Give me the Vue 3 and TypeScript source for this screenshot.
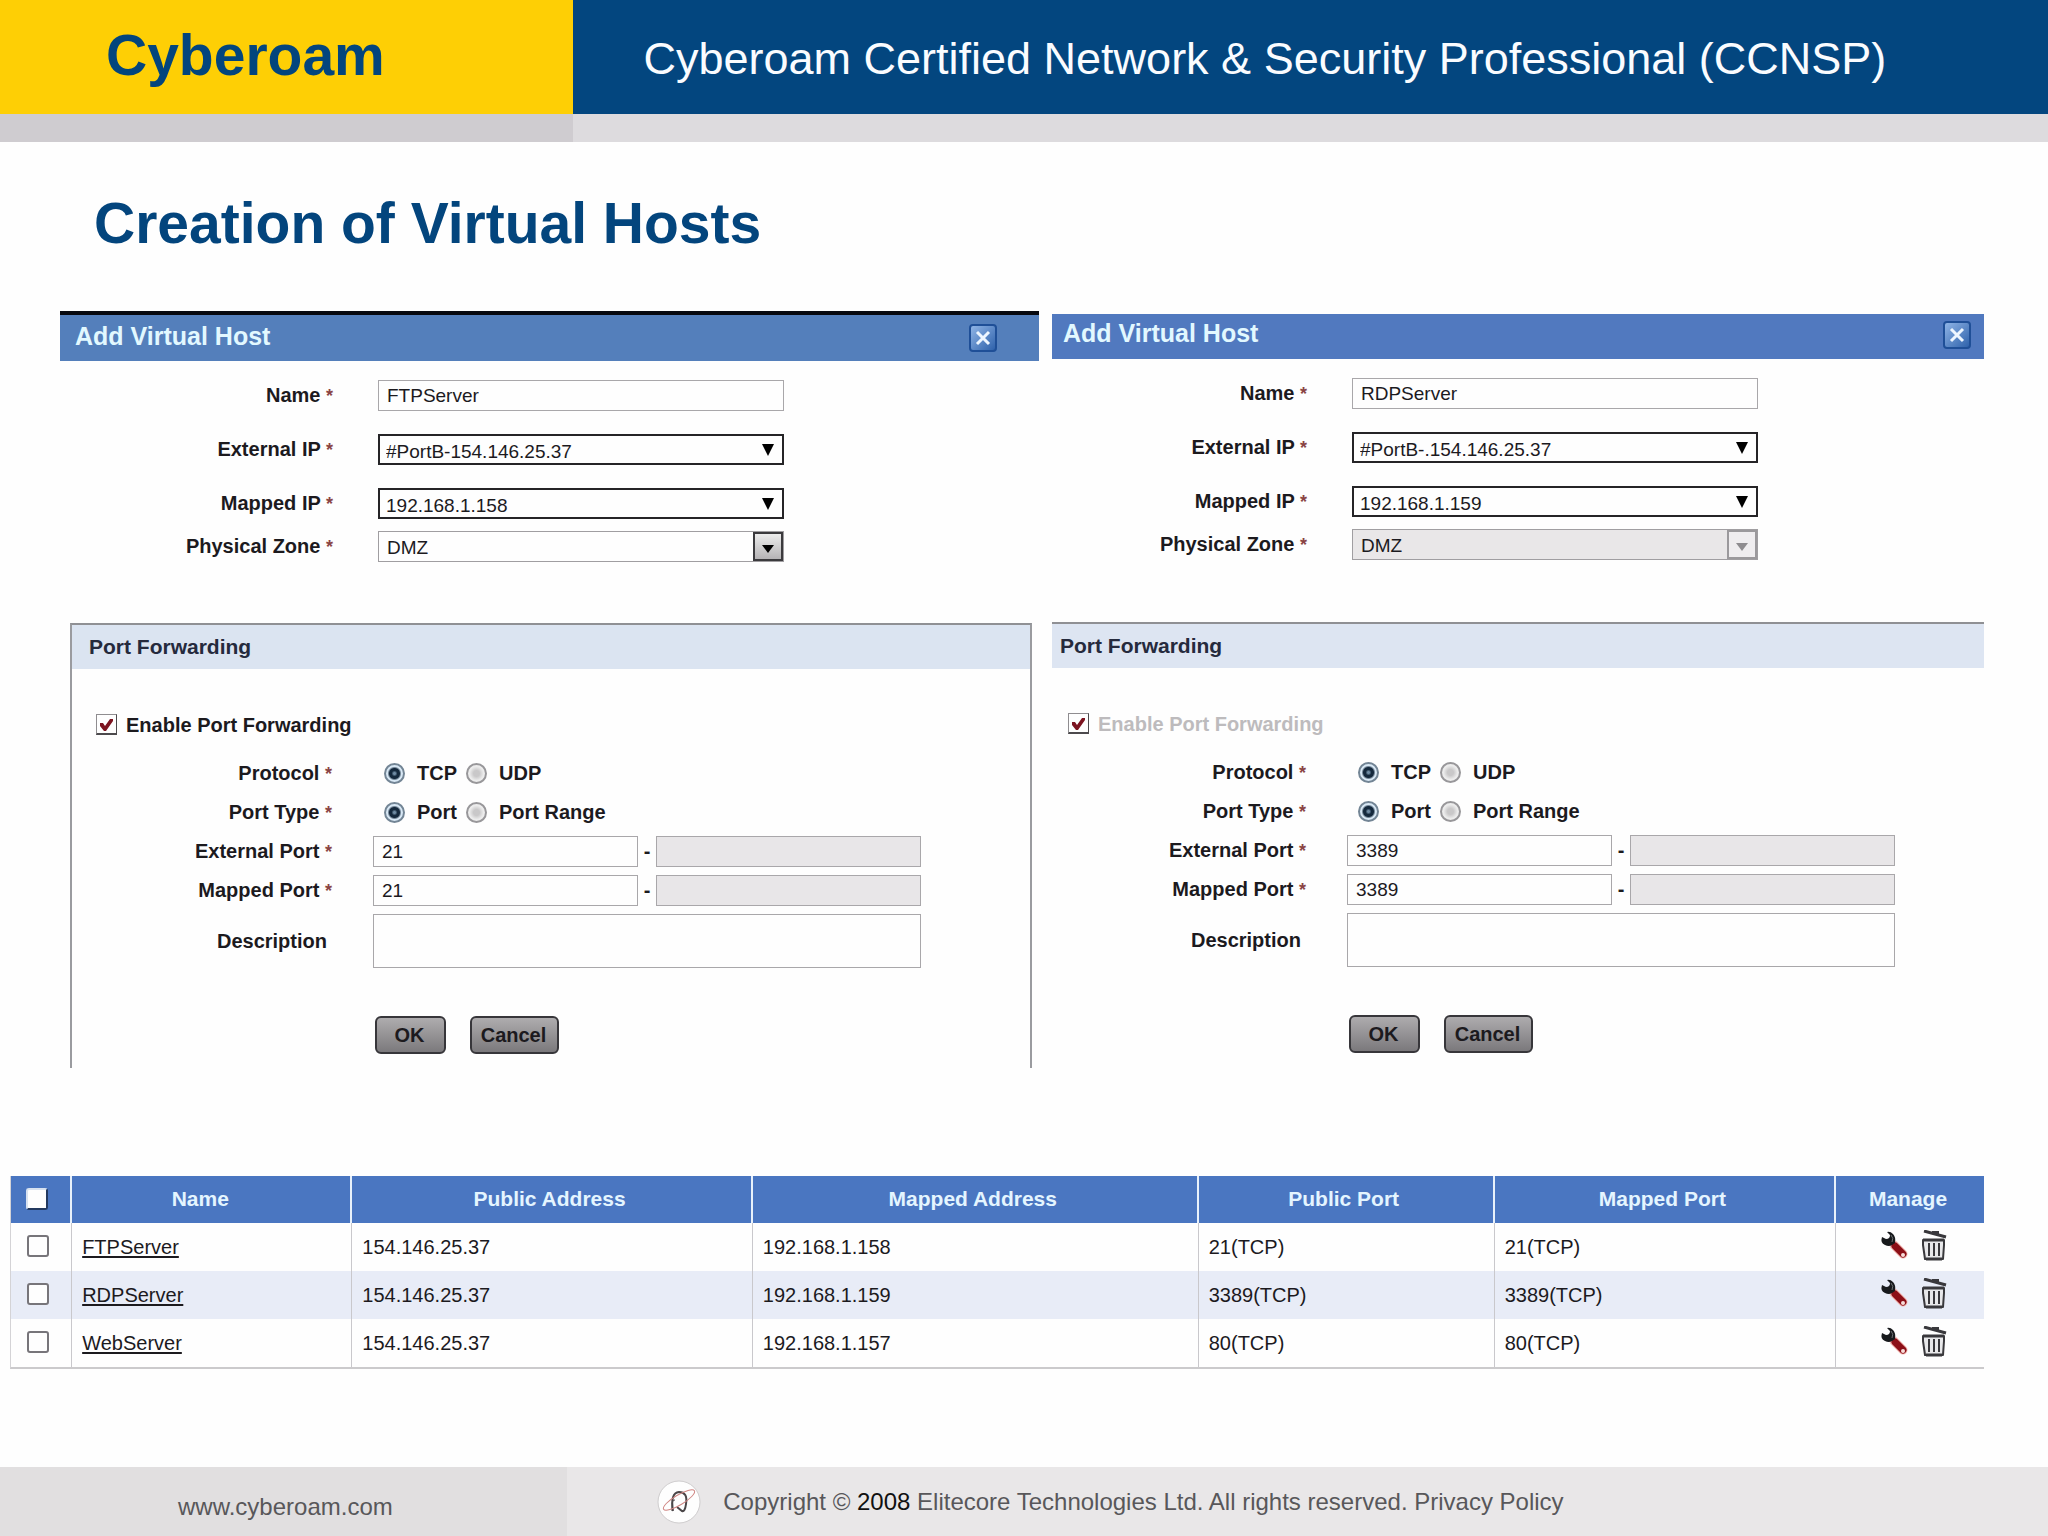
<script setup lang="ts">
import { reactive, ref } from 'vue'

interface HostForm {
  id: string
  name: string
  externalIp: string
  mappedIp: string
  zone: string
  locked: boolean
  enabled: boolean
  protocol: string
  portType: string
  externalPort: string
  mappedPort: string
  description: string
}

interface HostRow {
  name: string
  publicAddress: string
  mappedAddress: string
  publicPort: string
  mappedPort: string
  selected: boolean
}

const forms = reactive<HostForm[]>([
  {
    id: 'ftp',
    name: 'FTPServer',
    externalIp: '#PortB-154.146.25.37',
    mappedIp: '192.168.1.158',
    zone: 'DMZ',
    locked: false,
    enabled: true,
    protocol: 'TCP',
    portType: 'Port',
    externalPort: '21',
    mappedPort: '21',
    description: '',
  },
  {
    id: 'rdp',
    name: 'RDPServer',
    externalIp: '#PortB-.154.146.25.37',
    mappedIp: '192.168.1.159',
    zone: 'DMZ',
    locked: true,
    enabled: true,
    protocol: 'TCP',
    portType: 'Port',
    externalPort: '3389',
    mappedPort: '3389',
    description: '',
  },
])

const rows = reactive<HostRow[]>([
  { name: 'FTPServer', publicAddress: '154.146.25.37', mappedAddress: '192.168.1.158', publicPort: '21(TCP)', mappedPort: '21(TCP)', selected: false },
  { name: 'RDPServer', publicAddress: '154.146.25.37', mappedAddress: '192.168.1.159', publicPort: '3389(TCP)', mappedPort: '3389(TCP)', selected: false },
  { name: 'WebServer', publicAddress: '154.146.25.37', mappedAddress: '192.168.1.157', publicPort: '80(TCP)', mappedPort: '80(TCP)', selected: false },
])

const allSelected = ref(false)

function toggleAll() {
  rows.forEach((row) => (row.selected = allSelected.value))
}
</script>

<template>
  <div class="page">
    <header class="banner">
      <div class="brand">Cyberoam</div>
      <div class="course">Cyberoam Certified Network &amp; Security Professional (CCNSP)</div>
      <div class="strip strip-dark"></div>
      <div class="strip"></div>
    </header>

    <main>
      <h1>Creation of Virtual Hosts</h1>

      <div class="dialogs">
        <form v-for="f in forms" :key="f.id" class="dialog" :class="f.id" @submit.prevent>
          <div class="dialog-head">
            <h2>Add Virtual Host</h2>
            <button type="button" class="close" aria-label="Close">
              <svg viewBox="0 0 16 16" width="16" height="16" aria-hidden="true">
                <path d="M2 2 L14 14 M14 2 L2 14" stroke="#eef6ff" stroke-width="3" fill="none" />
              </svg>
            </button>
          </div>

          <div class="fields basics">
            <label :for="f.id + '-name'">Name <i>*</i></label>
            <input :id="f.id + '-name'" v-model="f.name" type="text" />

            <label :for="f.id + '-ext'">External IP <i>*</i></label>
            <div class="select dark">
              <select :id="f.id + '-ext'" v-model="f.externalIp">
                <option>{{ f.externalIp }}</option>
              </select>
              <svg class="arrow" viewBox="0 0 12 12" width="12" height="12" aria-hidden="true"><path d="M0 0H12L6 12Z" /></svg>
            </div>

            <label :for="f.id + '-map'">Mapped IP <i>*</i></label>
            <div class="select dark">
              <select :id="f.id + '-map'" v-model="f.mappedIp">
                <option>{{ f.mappedIp }}</option>
              </select>
              <svg class="arrow" viewBox="0 0 12 12" width="12" height="12" aria-hidden="true"><path d="M0 0H12L6 12Z" /></svg>
            </div>

            <label :for="f.id + '-zone'">Physical Zone <i>*</i></label>
            <div class="select zone">
              <select :id="f.id + '-zone'" v-model="f.zone" :disabled="f.locked">
                <option>{{ f.zone }}</option>
              </select>
              <span class="drop">
                <svg viewBox="0 0 12 8" width="12" height="8" aria-hidden="true"><path d="M0 0H12L6 8Z" /></svg>
              </span>
            </div>
          </div>

          <section class="forwarding">
            <h3>Port Forwarding</h3>

            <label class="enable">
              <span class="tick">
                <input v-model="f.enabled" type="checkbox" :disabled="f.locked" />
                <svg v-if="f.enabled" viewBox="0 0 21 21" width="21" height="21" aria-hidden="true">
                  <path d="M4 9 L7 9 L9 12 L14 5 L17 5 L17 7 L10 17 L8 17 L4 12Z" fill="#7c1420" />
                </svg>
              </span>
              <span class="enable-text">Enable Port Forwarding</span>
            </label>

            <div class="fields ports">
              <span class="caption" :id="f.id + '-proto'">Protocol <i>*</i></span>
              <div class="radios" role="radiogroup" :aria-labelledby="f.id + '-proto'">
                <label><input v-model="f.protocol" type="radio" value="TCP" :name="f.id + '-protocol'" />TCP</label>
                <label><input v-model="f.protocol" type="radio" value="UDP" :name="f.id + '-protocol'" />UDP</label>
              </div>

              <span class="caption" :id="f.id + '-ptype'">Port Type <i>*</i></span>
              <div class="radios" role="radiogroup" :aria-labelledby="f.id + '-ptype'">
                <label><input v-model="f.portType" type="radio" value="Port" :name="f.id + '-type'" />Port</label>
                <label><input v-model="f.portType" type="radio" value="Range" :name="f.id + '-type'" />Port Range</label>
              </div>

              <label :for="f.id + '-eport'">External Port <i>*</i></label>
              <div class="range">
                <input :id="f.id + '-eport'" v-model="f.externalPort" type="text" />
                <span>-</span>
                <input type="text" disabled aria-label="External port range end" />
              </div>

              <label :for="f.id + '-mport'">Mapped Port <i>*</i></label>
              <div class="range">
                <input :id="f.id + '-mport'" v-model="f.mappedPort" type="text" />
                <span>-</span>
                <input type="text" disabled aria-label="Mapped port range end" />
              </div>

              <label class="optional" :for="f.id + '-desc'">Description</label>
              <textarea :id="f.id + '-desc'" v-model="f.description"></textarea>

              <div class="actions">
                <button type="submit" class="ok">OK</button>
                <button type="button" class="cancel">Cancel</button>
              </div>
            </div>
          </section>
        </form>
      </div>

      <table>
        <colgroup>
          <col class="c-check" /><col class="c-name" /><col class="c-public" /><col class="c-mapped" />
          <col class="c-pport" /><col class="c-mport" /><col class="c-manage" />
        </colgroup>
        <thead>
          <tr>
            <th scope="col" class="check"><input v-model="allSelected" type="checkbox" aria-label="Select all hosts" @change="toggleAll" /></th>
            <th scope="col" class="name">Name</th>
            <th scope="col">Public Address</th>
            <th scope="col">Mapped Address</th>
            <th scope="col">Public Port</th>
            <th scope="col">Mapped Port</th>
            <th scope="col">Manage</th>
          </tr>
        </thead>
        <tbody>
          <tr v-for="r in rows" :key="r.name">
            <td class="check"><input v-model="r.selected" type="checkbox" :aria-label="'Select ' + r.name" /></td>
            <td><a href="#">{{ r.name }}</a></td>
            <td>{{ r.publicAddress }}</td>
            <td>{{ r.mappedAddress }}</td>
            <td>{{ r.publicPort }}</td>
            <td>{{ r.mappedPort }}</td>
            <td>
              <div class="manage">
                <button type="button" :aria-label="'Edit ' + r.name">
                  <svg viewBox="0 0 28 28" width="28" height="28" aria-hidden="true">
                    <path d="M14 14 L23 23" stroke="#f3b9b4" stroke-width="9" stroke-linecap="round" />
                    <path d="M15 15 L23 23" stroke="#8c0f17" stroke-width="7" stroke-linecap="round" />
                    <path d="M7 1 L10 4 Q10 8 6 8 L2 6 Q0 12 5 14 Q9 16 12 14 L15 12 Q16 6 13 3 Q10 0 7 1Z" fill="#17191c" />
                    <path d="M11 4 Q14 7 12 11" stroke="#6d7274" stroke-width="1" fill="none" />
                    <circle cx="23" cy="24" r="2" fill="#f8dcd8" />
                  </svg>
                </button>
                <button type="button" :aria-label="'Delete ' + r.name">
                  <svg viewBox="0 0 26 31" width="26" height="31" aria-hidden="true" fill="none" stroke="#39383c">
                    <path d="M3 1 L25 7" stroke-width="3" />
                    <path d="M11 2 L17 2 L17 5" stroke-width="2" />
                    <path d="M2 10 H23 V15 L22 29 H4 L2 15Z" stroke-width="2" stroke-linejoin="round" fill="#e8e8ea" />
                    <path d="M8 13 V26 M13 13 V26 M18 13 V26" stroke-width="2" />
                    <path d="M2 10 H23 M5 29 H21" stroke-width="3" />
                  </svg>
                </button>
              </div>
            </td>
          </tr>
        </tbody>
      </table>
    </main>

    <footer>
      <div class="site"><a href="#">www.cyberoam.com</a></div>
      <div class="legal">
        <svg viewBox="0 0 44 44" width="44" height="44" aria-hidden="true" fill="none">
          <circle cx="22" cy="22" r="21" fill="#fefefe" stroke="#cfcdce" />
          <path d="M16 31 Q13 13 22 12 Q31 12 29 24 Q28 32 25 31 L20 27" stroke="#4b4648" stroke-width="2" />
          <path d="M15 31 V23 Q16 19 18 20" stroke="#4b4648" stroke-width="1" />
          <ellipse cx="22" cy="20" rx="18" ry="5" transform="rotate(-31 22 20)" stroke="#cf8582" stroke-width="1" />
        </svg>
        <p>Copyright © <b>2008</b> Elitecore Technologies Ltd. All rights reserved. <a href="#">Privacy Policy</a></p>
      </div>
    </footer>
  </div>
</template>

<style>
body {
  margin: 0;
  background: #fefefe;
}
</style>

<style scoped>
.page {
  min-height: 100vh;
  display: flex;
  flex-direction: column;
  font-family: "Liberation Sans", Arial, sans-serif;
  font-size: 20px;
  color: #1c1a1e;
}
.page * {
  box-sizing: border-box;
}
input,
select,
textarea,
button {
  appearance: none;
  margin: 0;
  padding: 0;
  border-radius: 0;
  font: inherit;
  color: inherit;
}

/* Banner */
.banner {
  display: grid;
  grid-template-columns: 28% 1fr;
  grid-template-rows: 114px 28px;
}
.brand {
  background: #fecf05;
  color: #03457d;
  font-size: 57px;
  font-weight: bold;
  line-height: 111px;
  padding-left: 106px;
}
.course {
  background: #03467f;
  color: #fafcff;
  font-size: 45px;
  line-height: 117px;
  height: 114px;
  padding-left: 70px;
  white-space: nowrap;
}
.strip {
  background: #dddbde;
}
.strip-dark {
  background: #cfccd0;
}

h1 {
  margin: 49px 94px 56px;
  font-size: 57px;
  line-height: 64px;
  color: #03457d;
}

/* Dialogs */
.dialogs {
  display: grid;
  grid-template-columns: minmax(0, 979fr) minmax(0, 932fr);
  gap: 13px;
  align-items: start;
  padding: 0 64px 0 60px;
}
.dialog {
  --label: 273px;
  --port-label: 260px;
}
.dialog.ftp {
  border-top: 4px solid #07090f;
}
.dialog.rdp {
  --label: 255px;
  --port-label: 254px;
  padding-top: 3px;
}
.dialog-head {
  display: flex;
  justify-content: space-between;
  height: 46px;
  padding: 9px 42px 0 15px;
  background: #547fbb;
}
.rdp .dialog-head {
  height: 45px;
  padding: 7px 13px 0 11px;
  background: #5179bf;
}
h2 {
  margin: 0;
  font-size: 25px;
  line-height: 24px;
  color: #e2f8ff;
}
.close {
  display: flex;
  align-items: center;
  justify-content: center;
  width: 28px;
  height: 28px;
  border: 2px solid #1f4f97;
  border-radius: 4px;
  background: linear-gradient(135deg, #8fb4e6, #2f62ab);
}

.fields {
  display: grid;
}
.fields > label,
.caption {
  text-align: right;
  font-weight: bold;
}
i {
  font-size: 18px;
  font-style: normal;
  color: #8a4444;
}
.fields .optional {
  padding-right: 5px;
}
.basics {
  grid-template-columns: var(--label) minmax(0, 406px);
  grid-template-rows: 54px 54px 43px 31px;
  align-items: start;
  column-gap: 45px;
  padding-top: 19px;
  line-height: 31px;
}
input[type="text"],
textarea {
  width: 100%;
  height: 31px;
  padding: 0 8px;
  border: 1px solid #a9a7aa;
  background: #fefefe;
  font-size: 19px;
}
input[type="text"]:disabled {
  background: #e8e6e8;
}
.select {
  position: relative;
  height: 31px;
}
.select select {
  display: block;
  width: 100%;
  height: 31px;
  padding: 0 6px;
  border: 2px solid #252427;
  background: #fefefe;
  font-size: 19px;
}
.arrow {
  position: absolute;
  right: 10px;
  top: 10px;
  pointer-events: none;
}
.select.zone select {
  padding: 0 8px;
  border: 1px solid #a09ea1;
  opacity: 1;
}
.select.zone select:disabled {
  background: #e9e7e8;
}
.drop {
  position: absolute;
  top: 1px;
  right: 1px;
  width: 30px;
  height: 29px;
  display: flex;
  align-items: flex-end;
  justify-content: center;
  padding-bottom: 6px;
  border: 2px solid #3b3a3d;
  background: linear-gradient(#ececec, #b5b3b5);
  pointer-events: none;
}
.rdp .drop {
  border-color: #9b999c;
  background: #efedef;
  fill: #8e8c8f;
}

/* Port forwarding */
.forwarding {
  border-top: 2px solid #8f9094;
}
.ftp .forwarding {
  margin: 61px 7px 0 10px;
  border-left: 2px solid #9a9b9f;
  border-right: 2px solid #9a9b9f;
}
.rdp .forwarding {
  margin-top: 62px;
}
h3 {
  margin: 0;
  padding-left: 17px;
  background: #dbe4f1;
  font-size: 21px;
  line-height: 44px;
  color: #252a3d;
}
.rdp h3 {
  padding-left: 8px;
  background: #dde5f2;
}
.enable {
  display: flex;
  align-items: center;
  gap: 9px;
  width: max-content;
  margin-top: 45px;
  padding-left: 24px;
  height: 21px;
  font-weight: bold;
}
.rdp .enable {
  padding-left: 16px;
  color: #bdbbbd;
}
.enable-text {
  line-height: 20px;
}
.tick {
  position: relative;
  display: block;
  width: 21px;
  height: 21px;
}
.tick input {
  display: block;
  width: 21px;
  height: 21px;
  border: 1px solid #8f8d90;
  border-right-color: #4c4a4d;
  border-bottom: 2px solid #4c4a4d;
  background: #fefefe;
}
.tick svg {
  position: absolute;
  inset: 0;
  pointer-events: none;
}
.ports {
  grid-template-columns: var(--port-label) minmax(0, 548px);
  align-items: center;
  gap: 8px 41px;
  padding: 23px 0 14px;
}
.radios {
  display: flex;
  height: 31px;
  padding-left: 11px;
  gap: 9px;
  font-weight: bold;
}
.radios label {
  display: flex;
  align-items: center;
  gap: 12px;
}
.radios input {
  width: 21px;
  height: 21px;
  border: 2px solid #98979a;
  border-radius: 50%;
  background: radial-gradient(circle, #c9c8c9 0 3px, #ececec 7px);
}
.radios input:checked {
  border-color: #738595;
  background: radial-gradient(circle at 50% 50%, #6f8ba3 0 1px, #15293d 3px 5px, #d8e8f5 7px);
}
.range {
  display: grid;
  grid-template-columns: 1fr 18px 1fr;
  align-items: center;
  text-align: center;
  font-weight: bold;
}
.range input {
  font-weight: normal;
}
.ports textarea {
  display: block;
  height: 54px;
  resize: none;
}
.actions {
  grid-column: 2;
  display: flex;
  gap: 24px;
  margin-top: 40px;
  padding-left: 2px;
}
.actions button {
  height: 38px;
  padding: 0 6px 0 4px;
  border: 2px solid #37363a;
  border-radius: 6px;
  background: linear-gradient(#aeacae, #7b797c);
  font-weight: bold;
}
.actions .ok {
  width: 71px;
}
.actions .cancel {
  width: 89px;
}

/* Host table */
table {
  width: calc(100% - 74px);
  margin: 108px 64px 90px 10px;
  border-collapse: separate;
  border-spacing: 0;
  table-layout: fixed;
  border-bottom: 2px solid #cbcacc;
  border-left: 1px solid #d4d3d6;
}
.c-check { width: 3.1%; }
.c-name { width: 14.2%; }
.c-public { width: 20.3%; }
.c-mapped { width: 22.6%; }
.c-pport { width: 15%; }
.c-mport { width: 17.3%; }
.c-manage { width: 7.5%; }
th,
td {
  height: 48px;
  padding: 0 10px;
  text-align: left;
  border-right: 1px solid #c9c8cc;
}
th {
  height: 47px;
  padding: 0 4px 2px 0;
  text-align: center;
  font-size: 21px;
  color: #e4f5ff;
  background: #4a76c1;
  border-right: 2px solid #e8f1fb;
}
th.name {
  padding-right: 22px;
}
th:last-child,
td:last-child {
  border-right: 0;
}
tbody tr:nth-child(2) td {
  background: #e8ecf7;
}
td a {
  color: inherit;
  text-decoration-thickness: 2px;
  text-underline-offset: 2px;
}
th input,
td input {
  display: block;
  width: 22px;
  height: 22px;
  margin: 0 auto;
  border: 2px solid #77757a;
  border-radius: 3px;
  background: #fefefe;
}
th input {
  border-color: #d8e2f0 #23395f #23395f #d8e2f0;
}
.check,
td.check {
  padding: 0 7px 2px 0;
}
table input:checked {
  background: #4a76c1;
}
.manage {
  display: flex;
  justify-content: center;
  align-items: center;
  gap: 13px;
  padding: 0 0 4px 8px;
}
.manage button {
  display: block;
  border: 0;
  background: none;
}
.manage svg {
  display: block;
}

/* Footer */
footer {
  display: grid;
  grid-template-columns: 27.7% 1fr;
  grid-template-rows: 69px;
  margin-top: auto;
  font-size: 24px;
  color: #58575a;
  background: #e9e7e8;
}
footer a {
  color: inherit;
  text-decoration: none;
}
.site {
  display: flex;
  align-items: center;
  background: #e1dfe0;
  padding: 10px 0 0 178px;
}
.legal {
  display: flex;
  align-items: center;
  gap: 22px;
  padding-left: 90px;
}
.legal p {
  margin: 0;
}
.legal b {
  font-weight: normal;
  color: #111;
}
</style>
